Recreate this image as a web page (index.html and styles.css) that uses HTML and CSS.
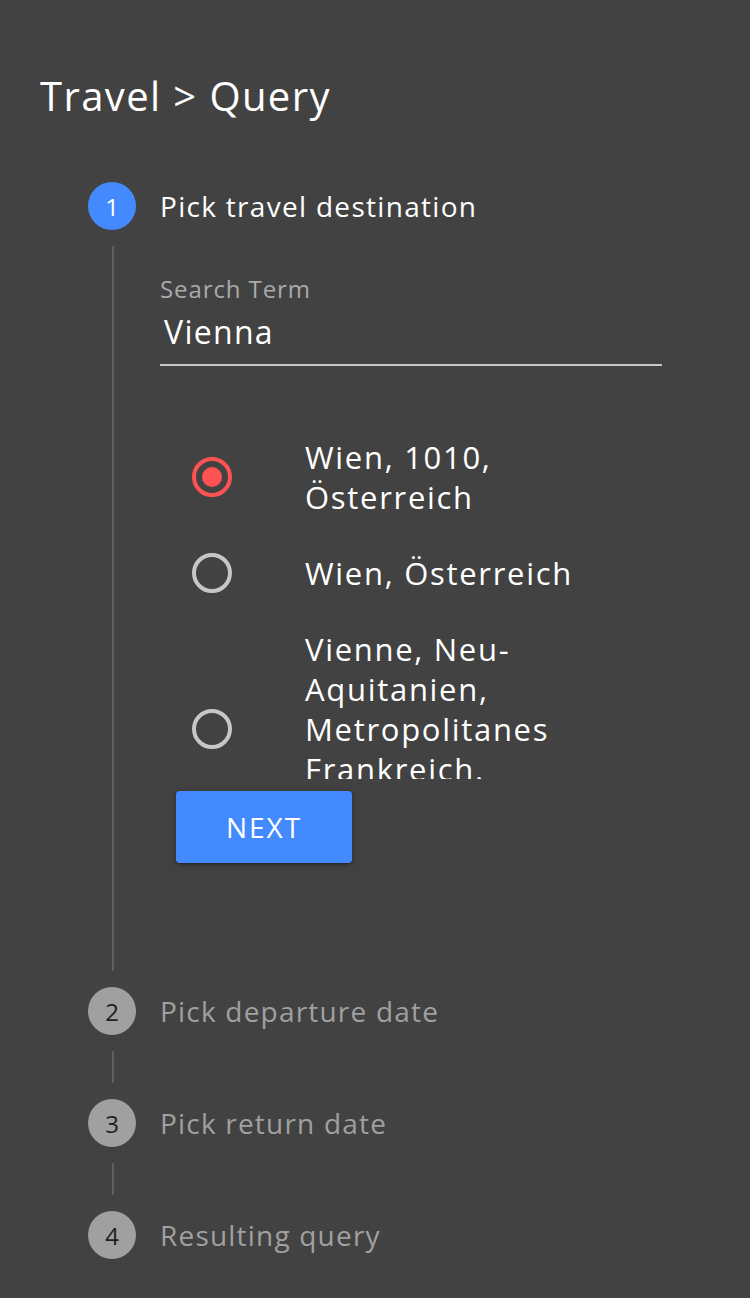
FILE: index.html
```html
<!DOCTYPE html>
<html lang="de">
<head>
<meta charset="utf-8">
<title>Travel Query</title>
<link rel="stylesheet" href="styles.css">
</head>
<body>
<main class="page">
  <h1 class="title">Travel &gt; Query</h1>
  <ol class="stepper">
    <li class="step">
      <div class="step-header">
        <span class="step-icon active">1</span>
        <span class="step-label active">Pick travel destination</span>
      </div>
      <div class="step-body step-body-open">
        <div class="field">
          <label class="field-label">Search Term</label>
          <div class="field-input">Vienna</div>
        </div>
        <div class="radio-group">
          <div class="radio-option">
            <span class="radio checked"><span class="radio-dot"></span></span>
            <span class="radio-text">Wien, 1010, Österreich</span>
          </div>
          <div class="radio-option">
            <span class="radio"></span>
            <span class="radio-text">Wien, Österreich</span>
          </div>
          <div class="radio-option">
            <span class="radio"></span>
            <span class="radio-text">Vienne, Neu-Aquitanien, Metropolitanes Frankreich. Frankreich</span>
          </div>
        </div>
        <button class="next-btn" type="button">NEXT</button>
      </div>
    </li>
    <li class="step">
      <div class="step-header">
        <span class="step-icon">2</span>
        <span class="step-label">Pick departure date</span>
      </div>
      <div class="step-body"></div>
    </li>
    <li class="step">
      <div class="step-header">
        <span class="step-icon">3</span>
        <span class="step-label">Pick return date</span>
      </div>
      <div class="step-body"></div>
    </li>
    <li class="step">
      <div class="step-header">
        <span class="step-icon">4</span>
        <span class="step-label">Resulting query</span>
      </div>
    </li>
  </ol>
</main>
</body>
</html>
```
FILE: styles.css
```css
html, body {
  margin: 0;
  padding: 0;
  background: #424242;
}

body {
  font-family: "Open Sans", "Noto Sans", sans-serif;
  color: #ffffff;
  min-height: 1298px;
}

.page {
  padding: 72px 40px 0 40px;
}

.title {
  margin: 0;
  font-size: 40px;
  line-height: 48px;
  font-weight: 400;
  letter-spacing: 1.4px;
}

.stepper {
  list-style: none;
  margin: 62px 0 0 0;
  padding: 0 0 0 48px;
}

.step-header {
  display: flex;
  align-items: center;
  gap: 24px;
  height: 48px;
}

.step-icon {
  width: 48px;
  height: 48px;
  border-radius: 50%;
  background: #a0a0a0;
  color: #1f1f1f;
  display: flex;
  align-items: center;
  justify-content: center;
  font-size: 24px;
  flex: none;
}

.step-icon.active {
  background: #448aff;
  color: #ffffff;
}

.step-label {
  font-size: 28px;
  color: #a0a0a0;
  letter-spacing: 1.2px;
}

.step-label.active {
  color: #ffffff;
  letter-spacing: 1.3px;
}

.step-body {
  margin: 16px 0 16px 24px;
  border-left: 2px solid #5e5e5e;
  min-height: 32px;
}

.step-body-open {
  padding: 28px 0 108px 46px;
}

.field {
  width: 502px;
  border-bottom: 2px solid #c6c6c6;
}

.field-label {
  display: block;
  font-size: 24px;
  line-height: 30px;
  color: #aaaaaa;
  letter-spacing: 0.9px;
}

.field-input {
  margin-top: 6px;
  padding: 0 0 10px 4px;
  font-size: 32px;
  line-height: 44px;
  letter-spacing: 1.3px;
}

.radio-group {
  margin-top: 71px;
  height: 342px;
  overflow: hidden;
  display: flex;
  flex-direction: column;
  gap: 36px;
}

.radio-option {
  display: flex;
  align-items: center;
  padding-left: 32px;
  gap: 73px;
  flex: none;
}

.radio {
  width: 40px;
  height: 40px;
  box-sizing: border-box;
  border: 4px solid #c6c6c6;
  border-radius: 50%;
  display: flex;
  align-items: center;
  justify-content: center;
  flex: none;
}

.radio.checked {
  border-color: #ff5252;
}

.radio-dot {
  width: 20px;
  height: 20px;
  border-radius: 50%;
  background: #ff5252;
}

.radio-text {
  width: 300px;
  font-size: 31px;
  line-height: 40px;
  letter-spacing: 1.7px;
}

.next-btn {
  display: block;
  margin: 12px 0 0 16px;
  width: 176px;
  height: 72px;
  border: none;
  border-radius: 4px;
  background: #448aff;
  color: #ffffff;
  font-family: inherit;
  font-size: 28px;
  letter-spacing: 2px;
  box-shadow: 0 3px 2px -2px rgba(0,0,0,0.25), 0 2px 4px 0 rgba(0,0,0,0.2), 0 1px 10px 0 rgba(0,0,0,0.15);
}
```
